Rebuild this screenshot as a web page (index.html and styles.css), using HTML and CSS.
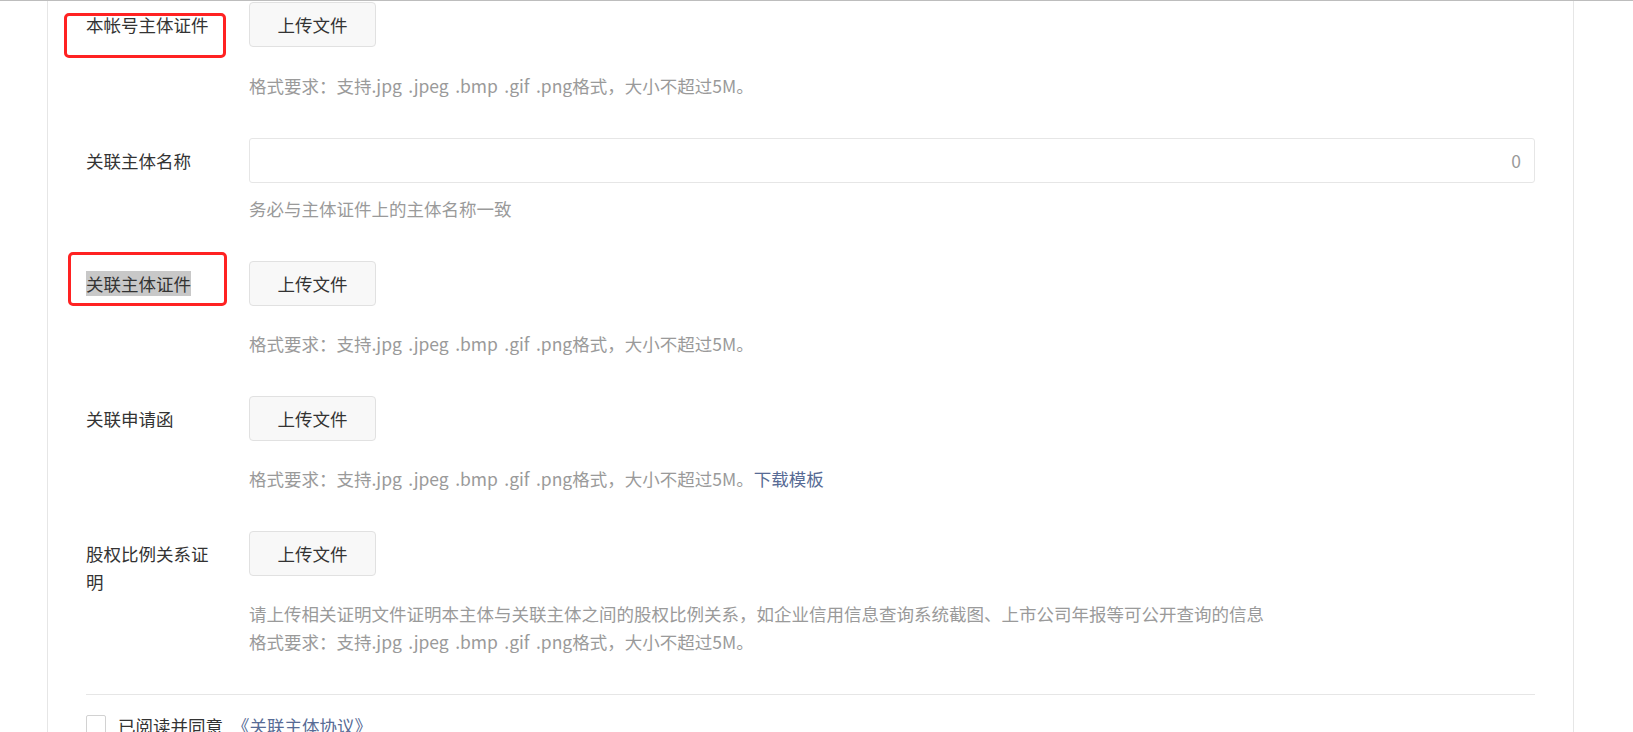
FILE: index.html
```html
<!DOCTYPE html>
<html lang="zh-CN">
<head>
    <meta charset="UTF-8">
    <meta name="viewport" content="width=device-width, initial-scale=1.0">
    <title>关联主体</title>
    <link rel="stylesheet" href="styles.css">
</head>
<body>
    <div class="panel">
        <div class="form-row first-row">
            <div class="form-label">本帐号主体证件</div>
            <div class="form-control">
                <button class="upload-btn">上传文件</button>
                <p class="tips">格式要求：支持.jpg .jpeg .bmp .gif .png格式，大小不超过5M。</p>
            </div>
            <div class="mark mark-one"></div>
        </div>

        <div class="form-row">
            <div class="form-label">关联主体名称</div>
            <div class="form-control">
                <div class="text-input">
                    <input type="text">
                    <span class="counter">0</span>
                </div>
                <p class="tips tips-near">务必与主体证件上的主体名称一致</p>
            </div>
        </div>

        <div class="form-row">
            <div class="form-label"><span class="selected">关联主体证件</span></div>
            <div class="form-control">
                <button class="upload-btn">上传文件</button>
                <p class="tips">格式要求：支持.jpg .jpeg .bmp .gif .png格式，大小不超过5M。</p>
            </div>
            <div class="mark mark-two"></div>
        </div>

        <div class="form-row">
            <div class="form-label">关联申请函</div>
            <div class="form-control">
                <button class="upload-btn">上传文件</button>
                <p class="tips">格式要求：支持.jpg .jpeg .bmp .gif .png格式，大小不超过5M。<a href="#">下载模板</a></p>
            </div>
        </div>

        <div class="form-row">
            <div class="form-label">股权比例关系证明</div>
            <div class="form-control">
                <button class="upload-btn">上传文件</button>
                <p class="tips">请上传相关证明文件证明本主体与关联主体之间的股权比例关系，如企业信用信息查询系统截图、上市公司年报等可公开查询的信息<br>格式要求：支持.jpg .jpeg .bmp .gif .png格式，大小不超过5M。</p>
            </div>
        </div>

        <div class="divider"></div>

        <label class="agree">
            <span class="checkbox"></span>
            <span>已阅读并同意</span>
            <a href="#">《关联主体协议》</a>
        </label>
    </div>
</body>
</html>
```

FILE: styles.css
```css
html, body {
    margin: 0;
    background: #fff;
    font-family: "Noto Sans CJK SC", "Microsoft YaHei", sans-serif;
    font-size: 17.5px;
    color: #333;
    overflow: hidden;
}
body {
    border-top: 1px solid #bdbdbd;
}
.panel {
    margin-left: 47px;
    width: 1449px;
    padding: 1px 38px 0;
    border-left: 1px solid #e6e6e6;
    border-right: 1px solid #e6e6e6;
    min-height: 740px;
}
.form-row {
    position: relative;
    display: flex;
    margin-bottom: 38px;
}
.form-label {
    width: 133px;
    padding-right: 30px;
    padding-top: 9px;
    line-height: 28px;
    flex-shrink: 0;
}
.form-label .selected {
    background-color: #c8c8c8;
}
.form-control {
    flex: 1;
}
.upload-btn {
    display: block;
    width: 127px;
    height: 45px;
    padding: 0;
    font-family: inherit;
    font-size: 17.5px;
    color: #333;
    background-color: #f8f8f8;
    border: 1px solid #e1e1e1;
    border-radius: 4px;
    cursor: pointer;
}
.text-input {
    display: flex;
    align-items: center;
    height: 43px;
    border: 1px solid #e6e6e6;
    border-radius: 3px;
    padding: 0 13px;
}
.text-input input {
    flex: 1;
    border: none;
    outline: none;
    font-family: inherit;
    font-size: 17.5px;
    background: transparent;
}
.counter {
    color: #9a9a9a;
}
.tips {
    margin: 24px 0 0;
    line-height: 28px;
    color: #9a9a9a;
    word-spacing: 2.5px;
}
.first-row .tips {
    margin-top: 25px;
}
.tips-near {
    margin-top: 12px;
}
.tips a, .agree a {
    color: #576b95;
    text-decoration: none;
}
.divider {
    border-top: 1px solid #e6e6e6;
    margin-top: 2px;
}
.agree {
    display: flex;
    align-items: flex-start;
    margin-top: 17px;
    line-height: 28px;
}
.agree .checkbox {
    width: 18px;
    height: 18px;
    border: 1px solid #d2d2d2;
    border-radius: 2px;
    margin: 3px 12px 0 0;
}
.agree a {
    margin-left: 9px;
}
/* red annotation boxes drawn over the screenshot */
.mark {
    position: absolute;
    border: 3px solid #ff2222;
    border-radius: 5px;
}
.mark-one {
    left: -22px;
    top: 11px;
    width: 156px;
    height: 39px;
}
.mark-two {
    left: -18px;
    top: -9px;
    width: 153px;
    height: 48px;
}
```
